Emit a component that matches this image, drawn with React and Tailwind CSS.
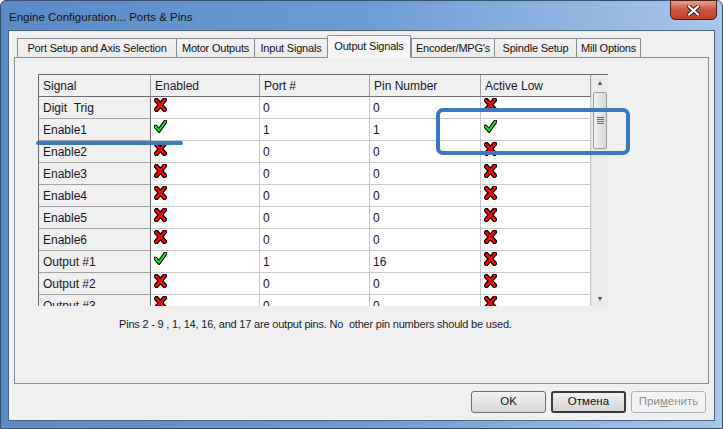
import React from "react";

const FONT = { fontFamily: '"Liberation Sans", Arial, sans-serif' };

const tabs = [
    { label: "Port Setup and Axis Selection", w: "w-[159px]" },
    { label: "Motor Outputs", w: "w-[78px]" },
    { label: "Input Signals", w: "w-[73px]" },
    { label: "Output Signals", w: "w-[84px]", active: true },
    { label: "Encoder/MPG's", w: "w-[83px]" },
    { label: "Spindle Setup", w: "w-[82px]" },
    { label: "Mill Options", w: "w-[65px]" },
];

const rows = [
    { name: "Digit\u00a0\u00a0Trig", en: false, port: "0", pin: "0", low: false },
    { name: "Enable1", en: true, port: "1", pin: "1", low: true },
    { name: "Enable2", en: false, port: "0", pin: "0", low: false },
    { name: "Enable3", en: false, port: "0", pin: "0", low: false },
    { name: "Enable4", en: false, port: "0", pin: "0", low: false },
    { name: "Enable5", en: false, port: "0", pin: "0", low: false },
    { name: "Enable6", en: false, port: "0", pin: "0", low: false },
    { name: "Output #1", en: true, port: "1", pin: "16", low: false },
    { name: "Output #2", en: false, port: "0", pin: "0", low: false },
    { name: "Output #3", en: false, port: "0", pin: "0", low: false },
];

function Cross() {
    return (
        <svg width="13" height="14" viewBox="0 0 13 14" className="block">
            <path d="M2.5 2.5 L10.5 11.5 M10.5 2 L2.5 11.5" stroke="#000" strokeWidth="5" strokeLinecap="square" fill="none" />
            <path d="M2.5 2.5 L10.5 11.5 M10.5 2 L2.5 11.5" stroke="#f00" strokeWidth="2.6" strokeLinecap="square" fill="none" />
        </svg>
    );
}

function Check() {
    return (
        <svg width="13" height="13" viewBox="0 0 13 13" className="block">
            <path d="M1.5 6.5 L5 10.5 L11.5 1.5" stroke="#000" strokeWidth="4" strokeLinejoin="miter" strokeLinecap="round" fill="none" />
            <path d="M1.5 6.5 L5 10.5 L11.5 1.5" stroke="#1ee01e" strokeWidth="2" strokeLinejoin="miter" strokeLinecap="round" fill="none" />
        </svg>
    );
}

function Flag({ on }) {
    return <div className="pl-[3px] pt-[1px]">{on ? <Check /> : <Cross />}</div>;
}

function Scrollbar() {
    return (
        <div className="w-[17px] bg-[#ececec] border-l border-[#e2e2e2] flex flex-col">
            <div className="h-[17px] flex items-center justify-center text-[7px] text-[#505050]">▲</div>
            <div className="mx-[1px] h-[57px] rounded-[2px] border border-[#9b9b9b] bg-gradient-to-r from-[#f3f3f3] to-[#d6d6d6] flex flex-col items-center justify-center gap-[1px]">
                <div className="w-[7px] h-px bg-[#6a6a6a]" />
                <div className="w-[7px] h-px bg-[#6a6a6a]" />
                <div className="w-[7px] h-px bg-[#6a6a6a]" />
                <div className="w-[7px] h-px bg-[#6a6a6a]" />
            </div>
            <div className="flex-1" />
            <div className="h-[12px] flex items-start justify-center text-[7px] text-[#505050]">▼</div>
        </div>
    );
}

function Grid() {
    const head = "h-[22px] flex items-center pl-[4px] bg-[#f0f0f0] border-r border-b border-[#a0a0a0]";
    const rowHead = "h-[22px] flex items-center pl-[4px] bg-[#f0f0f0] border-b border-[#a0a0a0] border-r border-r-[#6d6d6d]";
    const cell = "h-[22px] flex items-center pl-[3px] bg-white border-r border-b border-[#c8c8c8]";
    const flag = "h-[22px] bg-white border-r border-b border-[#c8c8c8]";
    return (
        <div className="w-[570px] h-[232px] flex border-l border-t border-[#6b6b6b] overflow-hidden text-[12px] text-[#141428]">
            <div className="grid grid-cols-[112px_109px_110px_111px_110px] content-start h-[231px] overflow-hidden">
                <div className={head + " border-r-[#a0a0a0] border-b-[#6d6d6d]"}>Signal</div>
                <div className={head + " border-b-[#6d6d6d]"}>Enabled</div>
                <div className={head + " border-b-[#6d6d6d]"}>Port #</div>
                <div className={head + " border-b-[#6d6d6d]"}>Pin Number</div>
                <div className={head + " border-b-[#6d6d6d]"}>Active Low</div>
                {rows.map((r) => (
                    <React.Fragment key={r.name}>
                        <div className={rowHead}>{r.name}</div>
                        <div className={flag}><Flag on={r.en} /></div>
                        <div className={cell}>{r.port}</div>
                        <div className={cell}>{r.pin}</div>
                        <div className={flag}><Flag on={r.low} /></div>
                    </React.Fragment>
                ))}
            </div>
            <Scrollbar />
        </div>
    );
}

function Button({ children, primary, disabled }) {
    return (
        <button
            className={`w-[75px] h-[22px] rounded-[3px] text-[11.5px] bg-gradient-to-b ${
                disabled
                    ? "border border-[#adb2b5] from-[#f4f4f4] to-[#f4f4f4] text-[#8d8d8d]"
                    : primary
                    ? "border-2 border-[#3c3c3c] from-[#f2f2f2] to-[#d4d4d4] text-[#111]"
                    : "border border-[#707070] from-[#f2f2f2] to-[#d6d6d6] text-[#111]"
            }`}
        >
            {children}
        </button>
    );
}

export default function App() {
    return (
        <div style={FONT} className="relative w-[723px] h-[429px] rounded-t-[6px] border border-[#34506f] bg-gradient-to-r from-[#5a8bc7] via-[#6d9bd3] to-[#a9c7ea] flex flex-col">
            <div className="h-[29px] flex justify-between">
                <div className="pl-[8px] pt-[8px] text-[11.5px] text-[#111]">Engine Configuration... Ports &amp; Pins</div>
                <div className="mr-[5px] -mt-px w-[47px] h-[20px] rounded-b-[5px] border border-[#4b1d14] bg-gradient-to-b from-[#e9a08f] via-[#c9543d] to-[#c2402a] flex items-center justify-center">
                    <svg width="13" height="11" viewBox="0 0 13 11">
                        <path d="M2 1.5 L11 9.5 M11 1.5 L2 9.5" stroke="#3a1a14" strokeWidth="4" strokeLinecap="square" />
                        <path d="M2 1.5 L11 9.5 M11 1.5 L2 9.5" stroke="#fff" strokeWidth="2.2" strokeLinecap="square" />
                    </svg>
                </div>
            </div>

            <div className="mx-[7px] h-[391px] border border-[#4b6282] bg-[#f0f0f0] flex flex-col">
                <div className="pt-[4px] px-[5px] flex flex-col">
                    <div className="flex items-end pl-[3px] text-[11px] tracking-[-0.2px] text-[#111]">
                        {tabs.map((t) =>
                            t.active ? (
                                <div key={t.label} className={`${t.w} h-[23px] -mb-px relative z-10 bg-[#f6f6f6] border border-b-0 border-[#898c95] rounded-t-[2px] flex items-center justify-center pb-[2px]`}>
                                    {t.label}
                                </div>
                            ) : (
                                <div key={t.label} className={`${t.w} h-[19px] bg-gradient-to-b from-[#f3f3f3] to-[#ebebeb] border border-b-0 border-r-0 last:border-r border-[#898c95] flex items-center justify-center`}>
                                    {t.label}
                                </div>
                            )
                        )}
                    </div>
                    <div className="h-[327px] border border-[#898c95] bg-[#f0f0f0] pt-[16px] pl-[23px]">
                        <Grid />
                        <p className="mt-[10px] pl-[81px] text-[11px] tracking-[-0.2px] text-[#1a1a2a]">
                            Pins 2 - 9 , 1, 14, 16, and 17 are output pins. No&nbsp; other pin numbers should be used.
                        </p>
                    </div>
                </div>
                <div className="mt-[7px] pr-[8px] flex justify-end gap-[5px]">
                    <Button>OK</Button>
                    <Button primary>Отмена</Button>
                    <Button disabled>При<span className="underline">м</span>енить</Button>
                </div>
            </div>

            <div className="absolute left-[35px] top-[140px] w-[147px] h-[4px] rounded-full bg-[#3b78c2]" />
            <div className="absolute left-[435px] top-[107px] w-[194px] h-[47px] rounded-[7px] border-[4px] border-[#3b78c2]" />
        </div>
    );
}
